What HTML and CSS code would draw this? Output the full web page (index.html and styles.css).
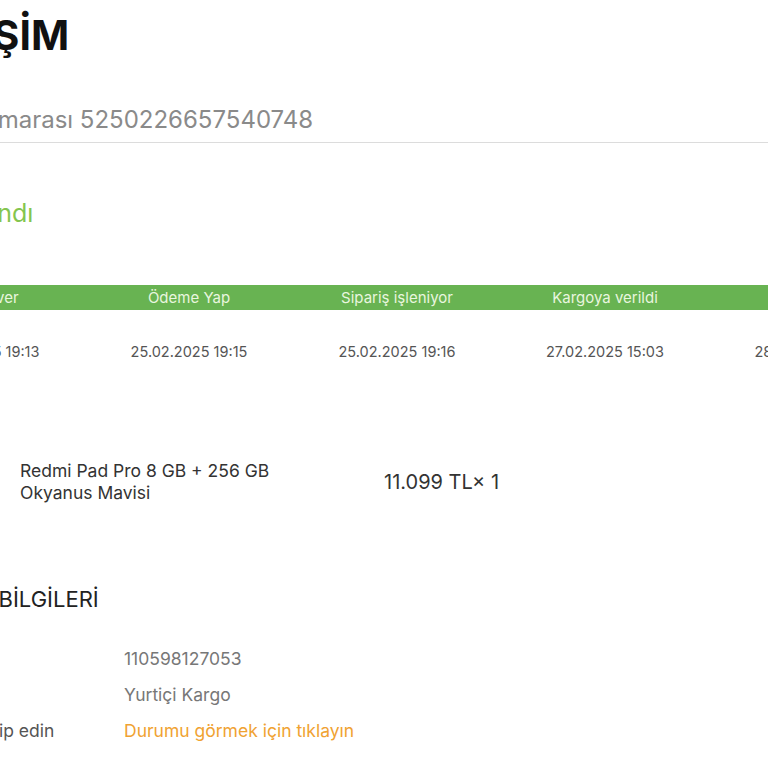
FILE: index.html
```html
<!DOCTYPE html>
<html lang="tr">
<head>
<meta charset="utf-8">
<title>Siparişim</title>
<link rel="stylesheet" href="styles.css">
</head>
<body>
<main class="page">
  <h1 class="title">SİPARİŞİM</h1>
  <div class="order-no">Sipariş numarası 5250226657540748</div>
  <div class="status">Tamamlandı</div>

  <section class="steps">
    <div class="steps-head">
      <span>Sipariş ver</span>
      <span>Ödeme Yap</span>
      <span>Sipariş işleniyor</span>
      <span>Kargoya verildi</span>
      <span>Teslim edildi</span>
    </div>
    <div class="steps-dates">
      <span>25.02.2025 19:13</span>
      <span>25.02.2025 19:15</span>
      <span>25.02.2025 19:16</span>
      <span>27.02.2025 15:03</span>
      <span>28.02.2025 11:20</span>
    </div>
  </section>

  <section class="product">
    <div class="product-name">Redmi Pad Pro 8 GB + 256 GB<br>Okyanus Mavisi</div>
    <div class="product-price">11.099 TL× 1</div>
  </section>

  <section class="cargo">
    <h2 class="cargo-title">KARGO BİLGİLERİ</h2>
    <div class="cargo-row"><span class="label">Takip kodun</span><span class="value">110598127053</span></div>
    <div class="cargo-row"><span class="label">Firma</span><span class="value">Yurtiçi Kargo</span></div>
    <div class="cargo-row"><span class="label">Kargonu takip edin</span><span class="value link">Durumu görmek için tıklayın</span></div>
  </section>
</main>
</body>
</html>
```
FILE: styles.css
```css
html, body {
  margin: 0;
  padding: 0;
  background: #fff;
  overflow: hidden;
}
body {
  font-family: Inter, "Noto Sans", sans-serif;
  color: #333;
  width: 768px;
  height: 768px;
}
.page {
  margin-left: -123px;
  width: 1100px;
}
.title {
  margin: 0 0 0 -15px;
  padding-top: 11px;
  font-size: 41px;
  line-height: 48px;
  font-weight: 700;
  color: #111;
}
.order-no {
  margin-top: 46px;
  padding-bottom: 7px;
  font-size: 24px;
  line-height: 30px;
  color: #8a8a8a;
  border-bottom: 1px solid #dcdcdc;
  padding-left: 8px;
}
.status {
  margin-top: 55px;
  font-size: 25px;
  line-height: 30px;
  color: #84c54f;
  padding-left: 14px;
}
.steps {
  margin-top: 57px;
}
.steps-head,
.steps-dates {
  display: grid;
  grid-template-columns: repeat(5, 208px);
  text-align: center;
}
.steps-head {
  background: #68b352;
  color: #e9f6df;
  font-size: 15px;
  line-height: 25px;
}
.steps-dates {
  margin-top: 32px;
  font-size: 14.5px;
  line-height: 20px;
  color: #555;
}
.product {
  display: flex;
  align-items: center;
  margin-top: 98px;
  padding-left: 143px;
}
.product-name {
  width: 364px;
  font-size: 17.5px;
  line-height: 22px;
  color: #333;
}
.product-price {
  font-size: 20px;
  line-height: 24px;
  color: #333;
}
.cargo-title {
  margin: 81px 0 0 38px;
  font-size: 22px;
  line-height: 28px;
  font-weight: 400;
  color: #222;
}
.cargo-row {
  display: grid;
  grid-template-columns: 225px 1fr;
  padding-left: 22px;
  font-size: 17.5px;
  line-height: 36px;
}
.cargo-title + .cargo-row {
  margin-top: 28px;
}
.label {
  color: #555;
}
.value {
  color: #777;
}
.link {
  color: #f0a232;
}
```
